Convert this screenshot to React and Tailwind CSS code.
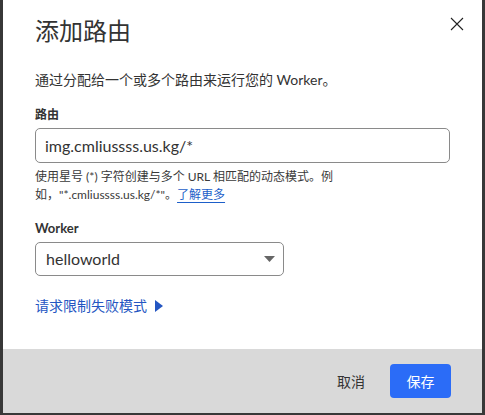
const font = { fontFamily: 'Lato, "Noto Sans CJK SC", sans-serif' };

export default function App() {
  return (
    <div className="w-[485px] h-[415px] bg-[#383838] pl-[3px] pr-[3px] pb-[2px] flex" style={font}>
      <div className="flex-1 bg-white flex flex-col text-[#333]">
        {/* Header */}
        <div className="flex items-start justify-between pl-[32px] pr-[18px] pt-[15px]">
          <h1 className="text-[24px] leading-[32px] font-normal text-[#333]">添加路由</h1>
          <button type="button" className="mt-[2px] w-[14px] h-[14px] flex items-center justify-center">
            <svg width="14" height="14" viewBox="0 0 14 14" fill="none" stroke="#222" strokeWidth="1.1">
              <path d="M1 1 L13 13 M13 1 L1 13" />
            </svg>
          </button>
        </div>

        {/* Body */}
        <div className="flex-1 px-[32px]">
          <p className="mt-[23px] text-[14px] leading-[20px]">通过分配给一个或多个路由来运行您的 Worker。</p>

          <label className="block mt-[16px] text-[12px] leading-[18px] font-bold">路由</label>
          <div className="mt-[4px] h-[35px] border border-[#8a8a8a] rounded-[5px] px-[9px] flex items-center text-[16px]">
            img.cmliussss.us.kg/*
          </div>
          <p className="mt-[5px] text-[12px] leading-[18px] text-[#3a3a3a]">
            使用星号 (*) 字符创建与多个 URL 相匹配的动态模式。例
            <br />
            如，"*.cmliussss.us.kg/*"。
            <a href="#" className="text-[#1d5fc9] underline underline-offset-[3px]">了解更多</a>
          </p>

          <label className="block mt-[15px] text-[13px] leading-[18px] font-bold">Worker</label>
          <div className="mt-[5px] w-[249px] h-[34px] border border-[#8a8a8a] rounded-[5px] pl-[10px] pr-[8px] flex items-center justify-between text-[16px]">
            <span>helloworld</span>
            <svg width="11" height="6" viewBox="0 0 11 6">
              <path d="M0 0 H11 L5.5 6 Z" fill="#666" />
            </svg>
          </div>

          <button type="button" className="mt-[20px] flex items-center gap-[8px] text-[14px] leading-[20px] text-[#2456c2]">
            请求限制失败模式
            <svg width="8" height="12" viewBox="0 0 8 12">
              <path d="M0 0 L8 6 L0 12 Z" fill="#2456c2" />
            </svg>
          </button>
        </div>

        {/* Footer */}
        <div className="h-[64px] bg-[#d9d9d9] flex items-center justify-end gap-[25px] pr-[31px]">
          <button type="button" className="text-[14px] text-[#333]">取消</button>
          <button type="button" className="w-[61px] h-[34px] rounded-[4px] bg-[#2b6cf7] text-white text-[14px]">保存</button>
        </div>
      </div>
    </div>
  );
}
